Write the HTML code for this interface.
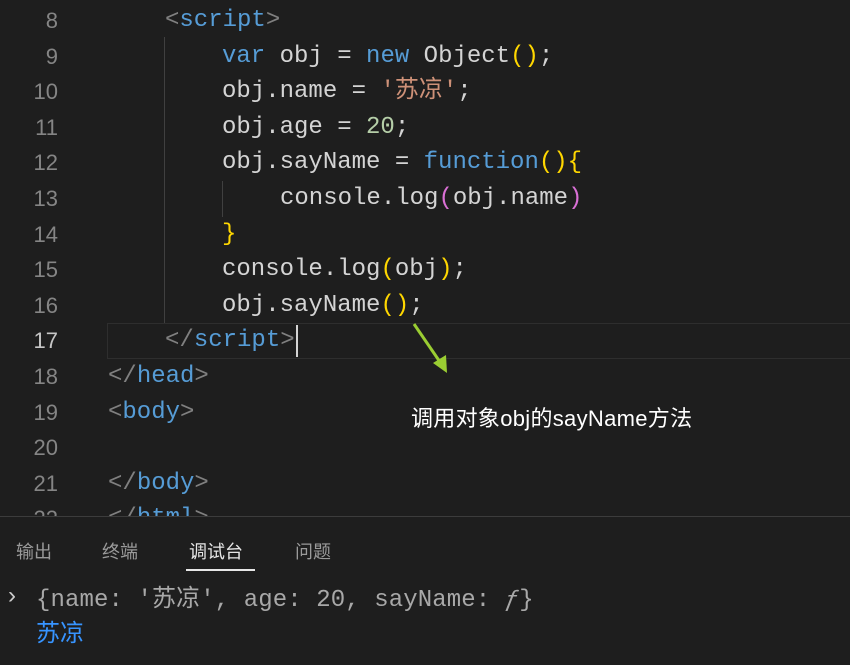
<!DOCTYPE html>
<html><head><meta charset="utf-8"><style>
html,body{margin:0;padding:0;}
body{width:850px;height:664px;background:#1e1e1e;overflow:hidden;position:relative;font-family:"Liberation Mono","Noto Sans CJK SC",monospace;}
.ln{position:absolute;width:58px;text-align:right;left:0;color:#858585;font-size:22px;line-height:36px;font-family:"Liberation Sans",sans-serif;}
.c{position:absolute;font-size:24px;line-height:36px;color:#d4d4d4;white-space:pre;}
.t{color:#808080}.k{color:#569cd6}.s{color:#ce9178}.n{color:#b5cea8}.y{color:#ffd700}.p{color:#da70d6}.f{color:#dcdcaa}
.tab{position:absolute;top:538px;font-size:18px;color:#9a9a9a;font-family:"Liberation Sans","Noto Sans CJK SC",sans-serif;}
</style></head><body>
<div style="position:absolute;left:107px;top:323px;width:745px;height:34px;border:1px solid #2e2e2e;"></div>
<div style="position:absolute;left:164px;top:37px;width:1px;height:286px;background:#404040"></div>
<div style="position:absolute;left:222px;top:181px;width:1px;height:36px;background:#404040"></div>
<div style="position:absolute;left:296px;top:325px;width:2px;height:32px;background:#d4d4d4"></div>

<div class="ln" style="top:3px">8</div>
<div class="ln" style="top:39px">9</div>
<div class="ln" style="top:74px">10</div>
<div class="ln" style="top:110px">11</div>
<div class="ln" style="top:145px">12</div>
<div class="ln" style="top:181px">13</div>
<div class="ln" style="top:217px">14</div>
<div class="ln" style="top:252px">15</div>
<div class="ln" style="top:288px">16</div>
<div class="ln" style="top:323px;color:#c6c6c6">17</div>
<div class="ln" style="top:359px">18</div>
<div class="ln" style="top:395px">19</div>
<div class="ln" style="top:430px">20</div>
<div class="ln" style="top:466px">21</div>
<div class="ln" style="top:501px">22</div>

<div class="c" style="left:165px;top:3px"><span class="t">&lt;</span><span class="k">script</span><span class="t">&gt;</span></div>
<div class="c" style="left:222px;top:39px"><span class="k">var</span> obj = <span class="k">new</span> Object<span class="y">()</span>;</div>
<div class="c" style="left:222px;top:74px">obj.name = <span class="s">'苏凉'</span>;</div>
<div class="c" style="left:222px;top:110px">obj.age = <span class="n">20</span>;</div>
<div class="c" style="left:222px;top:145px">obj.sayName = <span class="k">function</span><span class="y">(){</span></div>
<div class="c" style="left:280px;top:181px">console.log<span class="p">(</span>obj.name<span class="p">)</span></div>
<div class="c" style="left:222px;top:217px"><span class="y">}</span></div>
<div class="c" style="left:222px;top:252px">console.log<span class="y">(</span>obj<span class="y">)</span>;</div>
<div class="c" style="left:222px;top:288px">obj.sayName<span class="y">()</span>;</div>
<div class="c" style="left:165px;top:323px"><span class="t">&lt;/</span><span class="k">script</span><span class="t">&gt;</span></div>
<div class="c" style="left:108px;top:359px"><span class="t">&lt;/</span><span class="k">head</span><span class="t">&gt;</span></div>
<div class="c" style="left:108px;top:395px"><span class="t">&lt;</span><span class="k">body</span><span class="t">&gt;</span></div>
<div class="c" style="left:108px;top:466px"><span class="t">&lt;/</span><span class="k">body</span><span class="t">&gt;</span></div>
<div class="c" style="left:108px;top:501px"><span class="t">&lt;/</span><span class="k">html</span><span class="t">&gt;</span></div>

<svg style="position:absolute;left:0;top:0" width="850" height="664">
<line x1="414" y1="324" x2="440" y2="362" stroke="#9acd32" stroke-width="3"/>
<polygon points="433,363 447,373 446,355" fill="#9acd32"/>
</svg>
<div style="position:absolute;left:411px;top:401px;font-size:22px;color:#fff;font-family:'Liberation Sans','Noto Sans CJK SC',sans-serif;letter-spacing:0.3px">调用对象obj的sayName方法</div>

<div style="position:absolute;left:0;top:516px;width:850px;height:148px;background:#1e1e1e;border-top:1px solid #3c3c3c"></div>
<div class="tab" style="left:16px">输出</div>
<div class="tab" style="left:102px">终端</div>
<div class="tab" style="left:189px;color:#e7e7e7">调试台</div>
<div class="tab" style="left:295px">问题</div>
<div style="position:absolute;left:186px;top:569px;width:69px;height:2px;background:#e7e7e7"></div>
<div style="position:absolute;left:8px;top:582px;font-size:24px;color:#ccc;font-family:'Liberation Sans',sans-serif">›</div>
<div class="c" style="left:36px;top:583px;color:#a8a8a8;font-size:24px;letter-spacing:0.1px">{name: '苏凉', age: 20, sayName: <i>ƒ</i>}</div>
<div class="c" style="left:36px;top:618px;color:#3794ff;font-size:24px">苏凉</div>
</body></html>
